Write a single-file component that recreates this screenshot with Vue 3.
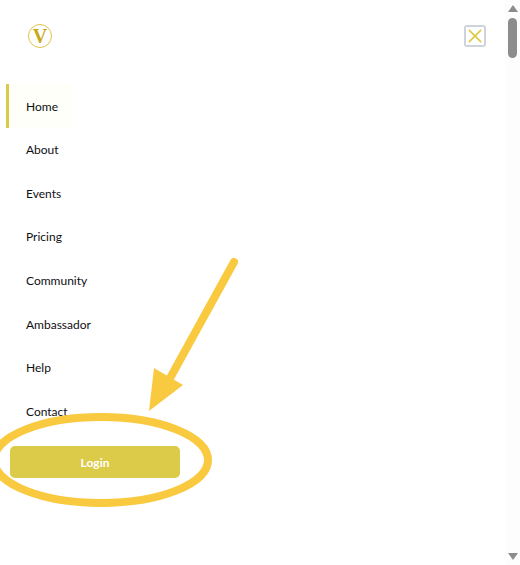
<template>
  <div class="page">
    <div class="content">
      <header class="top-bar">
        <a class="logo">
          <span class="logo-ring">V</span>
        </a>
        <button class="close-btn">
          <svg viewBox="0 0 16 16" fill="none" stroke="currentColor" stroke-width="1.8">
            <line x1="1" y1="1" x2="15" y2="15"/>
            <line x1="15" y1="1" x2="1" y2="15"/>
          </svg>
        </button>
      </header>

      <nav class="nav">
        <a
          v-for="item in links"
          :key="item"
          class="nav-link"
          :class="{ active: item === 'Home' }"
        >{{ item }}</a>
      </nav>

      <button class="login-btn">Login</button>
    </div>

    <div class="scrollbar">
      <span class="arrow-up"></span>
      <span class="thumb"></span>
      <span class="arrow-down"></span>
    </div>

    <svg class="annotation" viewBox="0 0 505 565">
      <ellipse cx="101" cy="460" rx="107" ry="43" fill="none" stroke="#f9ca40" stroke-width="8"/>
      <line x1="234" y1="262" x2="169" y2="380" stroke="#f9ca40" stroke-width="8" stroke-linecap="round"/>
      <polygon points="154,368 183,385 149,411" fill="#f9ca40"/>
    </svg>
  </div>
</template>

<script setup>
const links = ["Home", "About", "Events", "Pricing", "Community", "Ambassador", "Help", "Contact"];
</script>

<style>
html, body {
  margin: 0;
  background: #fff;
  overflow: hidden;
}
</style>

<style scoped>
.page {
  position: relative;
  display: flex;
  width: 520px;
  height: 565px;
  overflow: hidden;
  font-family: Lato, "Liberation Sans", sans-serif;
  background: #fff;
}

.content {
  flex: 1;
  padding: 0 19px 0 6px;
}

.top-bar {
  display: flex;
  align-items: center;
  justify-content: space-between;
  height: 84.3px;
  padding: 0 0 12px 22px;
  box-sizing: border-box;
}

.logo {
  display: block;
}

.logo-ring {
  display: flex;
  align-items: center;
  justify-content: center;
  width: 24px;
  height: 24px;
  box-sizing: border-box;
  border: 1px solid #dfc34a;
  border-radius: 50%;
  color: #c9a91a;
  font-family: "Liberation Serif", serif;
  font-size: 20px;
  font-weight: 700;
  line-height: 1;
}

.close-btn {
  display: flex;
  align-items: center;
  justify-content: center;
  width: 22px;
  height: 22px;
  padding: 0;
  box-sizing: border-box;
  background: #fff;
  border: 2px solid #ced4da;
  border-radius: 3px;
  color: #dcc944;
}

.close-btn svg {
  width: 14px;
  height: 14px;
}

.nav {
  display: flex;
  flex-direction: column;
  align-items: flex-start;
}

.nav-link {
  display: block;
  padding: 0 12px 0 20px;
  height: 43.7px;
  line-height: 44px;
  font-size: 12px;
  color: #0f0f14;
}

.nav-link.active {
  width: 67px;
  box-sizing: border-box;
  padding-top: 1px;
  padding-left: 17px;
  border-left: 3px solid #dccb48;
  background: #fdfff8;
}

.login-btn {
  display: block;
  width: 170px;
  height: 32px;
  margin: 12px 0 0 4px;
  padding: 2px 0 0;
  background: #dccb48;
  border: none;
  border-radius: 5px;
  color: #fff;
  font-family: inherit;
  font-size: 12px;
  font-weight: 700;
}

.scrollbar {
  flex: 0 0 15px;
  display: flex;
  flex-direction: column;
  align-items: center;
  padding: 5px 0;
  box-sizing: border-box;
  background: #fdfdfd;
}

.arrow-up,
.arrow-down {
  width: 0;
  height: 0;
  border-left: 5px solid transparent;
  border-right: 5px solid transparent;
}

.arrow-up {
  border-bottom: 7px solid #8c8c8c;
}

.arrow-down {
  margin-top: auto;
  border-top: 7px solid #8c8c8c;
}

.thumb {
  width: 9px;
  height: 40px;
  margin-top: 6px;
  background: #8c8c8c;
  border-radius: 5px;
}

.annotation {
  position: absolute;
  top: 0;
  left: 0;
  width: 505px;
  height: 565px;
  pointer-events: none;
}
</style>
